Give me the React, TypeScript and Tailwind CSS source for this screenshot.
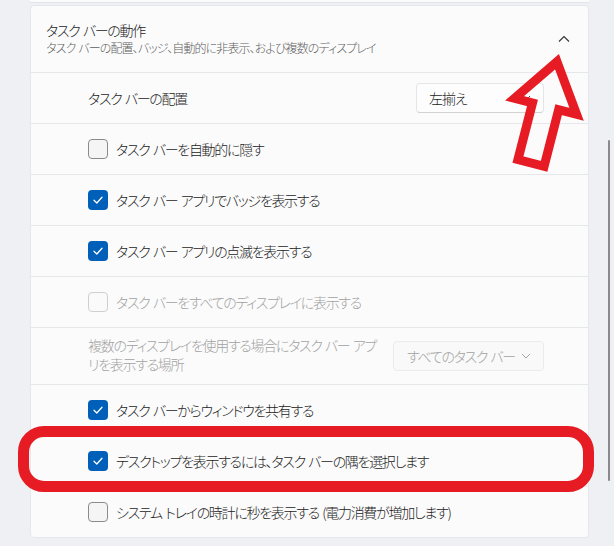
import React from "react";

const FONT =
  "font-['Noto_Sans_CJK_JP',sans-serif] [font-feature-settings:'palt'] font-light";

const sp = (s: string) => s.replace(/ /g, "\u2004");

function Check({ checked, disabled }: { checked?: boolean; disabled?: boolean }) {
  if (checked) {
    return (
      <div className="w-5 h-5 rounded-[4px] bg-[#005fb8] flex items-center justify-center shrink-0">
        <svg width="12" height="12" viewBox="0 0 12 12" fill="none">
          <path d="M2 6.3 L4.8 9 L10 3.2" stroke="white" strokeWidth="1.3" strokeLinecap="round" strokeLinejoin="round" />
        </svg>
      </div>
    );
  }
  return (
    <div
      className={
        "w-5 h-5 rounded-[4px] border shrink-0 " +
        (disabled ? "border-[#cfcfcf] bg-[#fafafa]" : "border-[#8a8a8a] bg-[#f5f5f5]")
      }
    />
  );
}

function CheckRow({ label, checked, disabled }: { label: string; checked?: boolean; disabled?: boolean }) {
  return (
    <div className="h-[51px] border-t border-[#e6e7ea] flex items-center pl-[57px]">
      <Check checked={checked} disabled={disabled} />
      <span
        className={
          "ml-2 text-[14px] tracking-[-1.3px] whitespace-nowrap " +
          (disabled ? "text-[#a2a2a2]" : "text-[#1b1b1b]")
        }
      >
        {sp(label)}
      </span>
    </div>
  );
}

export default function App() {
  return (
    <div className={"relative w-[614px] h-[546px] overflow-hidden bg-[#eef0f4] flex " + FONT}>
      <div className="pl-[30px] w-[589px] flex flex-col">
        <div className="h-[3px] bg-[#fbfbfb] border-b border-[#e3e4e7]" />
        <div className="mt-[2px] bg-[#fbfbfb] border border-[#e6e7ea] rounded-[4px] flex flex-col">
          <div className="h-[66px] flex items-center justify-between pl-[15px] pr-[18px]">
            <div className="flex flex-col mt-[-3px]">
              <span className="text-[14px] leading-[20px] tracking-[-1.3px] text-[#1b1b1b] whitespace-nowrap">
                {sp("タスク バーの動作")}
              </span>
              <span className="text-[12px] leading-[16px] tracking-[-0.9px] text-[#5f5f5f] whitespace-nowrap">
                {sp("タスク バーの配置、バッジ、自動的に非表示、および複数のディスプレイ")}
              </span>
            </div>
            <svg width="12" height="8" viewBox="0 0 12 8" fill="none" className="mt-[-1px]">
              <path d="M1 6.5 L6 1.5 L11 6.5" stroke="#333" strokeWidth="1.1" />
            </svg>
          </div>

          <div className="h-[51px] border-t border-[#e6e7ea] flex items-center justify-between pl-[57px] pr-[44px]">
            <span className="text-[14px] tracking-[-1.3px] text-[#1b1b1b] whitespace-nowrap">{sp("タスク バーの配置")}</span>
            <div className="w-[128px] h-[30px] rounded-[4px] bg-[#fdfdfd] border border-[#e5e5e5] border-b-[#d2d2d2] flex items-center justify-between pl-[12px] pr-[12px]">
              <span className="text-[14px] tracking-[-1px] text-[#1b1b1b]">左揃え</span>
              <svg width="10" height="6" viewBox="0 0 10 6" fill="none">
                <path d="M1 1 L5 5 L9 1" stroke="#444" strokeWidth="1" />
              </svg>
            </div>
          </div>

          <CheckRow label="タスク バーを自動的に隠す" />
          <CheckRow label="タスク バー アプリでバッジを表示する" checked />
          <CheckRow label="タスク バー アプリの点滅を表示する" checked />
          <CheckRow label="タスク バーをすべてのディスプレイに表示する" disabled />

          <div className="h-[57px] border-t border-[#e6e7ea] flex items-center justify-between pl-[57px] pr-[44px]">
            <div className="flex flex-col text-[14px] leading-[19px] tracking-[-1.3px] text-[#a2a2a2] mt-[-2px]">
              <span className="whitespace-nowrap">{sp("複数のディスプレイを使用する場合にタスク バー アプ")}</span>
              <span className="whitespace-nowrap">リを表示する場所</span>
            </div>
            <div className="w-[151px] h-[30px] rounded-[4px] bg-[#f9f9f9] border border-[#ebebeb] flex items-center justify-between pl-[13px] pr-[12px]">
              <span className="text-[14px] tracking-[-1.3px] text-[#a2a2a2] whitespace-nowrap">{sp("すべてのタスク バー")}</span>
              <svg width="10" height="6" viewBox="0 0 10 6" fill="none">
                <path d="M1 1 L5 5 L9 1" stroke="#a8a8a8" strokeWidth="1" />
              </svg>
            </div>
          </div>

          <CheckRow label="タスク バーからウィンドウを共有する" checked />
          <CheckRow label="デスクトップを表示するには、タスク バーの隅を選択します" checked />
          <CheckRow label="システム トレイの時計に秒を表示する (電力消費が増加します)" />
        </div>
      </div>

      <div className="flex-1">
        <div className="ml-[19px] mt-[140px] w-[2px] h-[341px] rounded-full bg-[#8a8a8a]" />
      </div>

      {/* annotation: red rounded rectangle */}
      <div className="absolute left-[18px] top-[426px] w-[576px] h-[66px] rounded-[26px] border-[11px] border-[#e61b23] pointer-events-none" />

      {/* annotation: red arrow */}
      <svg className="absolute left-0 top-0 pointer-events-none" width="614" height="546" viewBox="0 0 614 546">
        <g transform="translate(559 54) rotate(14.4)">
          <path
            d="M0 8 L32 54 L13.5 54 L13.5 112.5 L-13.5 112.5 L-13.5 54 L-32 54 Z"
            fill="none"
            stroke="#e61b23"
            strokeWidth="9"
            strokeLinejoin="miter"
            strokeMiterlimit="10"
          />
        </g>
      </svg>
    </div>
  );
}
